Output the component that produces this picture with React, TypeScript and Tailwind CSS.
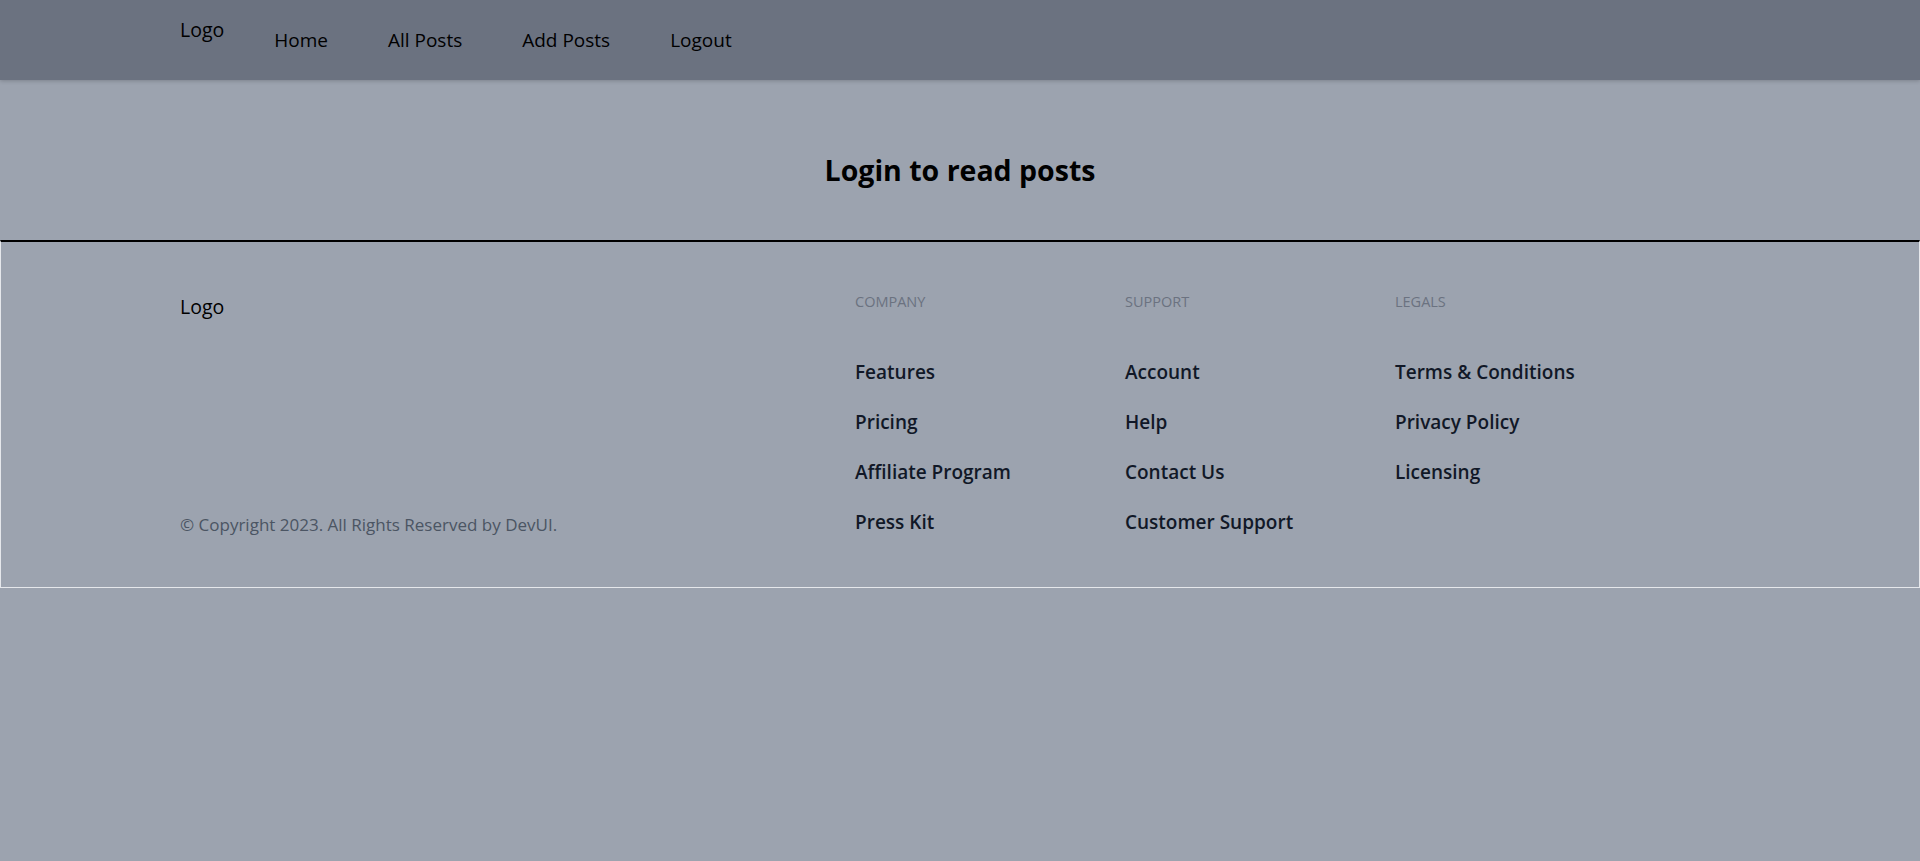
import React from "react";

const navItems = ["Home", "All Posts", "Add Posts", "Logout"];

const columns = [
  { title: "Company", width: "w-2/12", items: ["Features", "Pricing", "Affiliate Program", "Press Kit"] },
  { title: "Support", width: "w-2/12", items: ["Account", "Help", "Contact Us", "Customer Support"] },
  { title: "Legals", width: "w-3/12", items: ["Terms & Conditions", "Privacy Policy", "Licensing"] },
];

export default function App() {
  return (
    <div
      className="min-h-screen w-full bg-[#9ca3af] text-black"
      style={{ fontFamily: '"Open Sans", "Noto Sans", sans-serif' }}
    >
      <header className="relative z-10 bg-[#6b7280] py-[15px] shadow-[0_1px_4px_rgba(0,0,0,0.2)]">
        <div className="mx-auto w-full max-w-[1600px] px-[20px]">
          <nav className="flex">
            <div className="mr-[20px] text-[19.5px] leading-[30px]">Logo</div>
            <ul className="flex">
              {navItems.map((item) => (
                <li key={item}>
                  <button className="inline-block rounded-full px-[30px] py-[10px] text-[19px] leading-[30px]">
                    {item}
                  </button>
                </li>
              ))}
            </ul>
          </nav>
        </div>
      </header>

      <main className="mt-[20px] w-full py-[40px] text-center">
        <div className="mx-auto w-full max-w-[1600px] px-[20px]">
          <div className="w-full p-[10px]">
            <h1 className="text-[28.5px] font-bold leading-[40px]">Login to read posts</h1>
          </div>
        </div>
      </main>

      <footer className="border border-[#e5e7eb] border-t-2 border-t-black py-[50px]">
        <div className="mx-auto w-full max-w-[1600px] px-[20px]">
          <div className="-mx-[30px] flex">
            <div className="w-5/12 px-[30px]">
              <div className="flex h-full flex-col justify-between">
                <div className="text-[19.5px] leading-[30px]">Logo</div>
                <p className="text-[17px] leading-[25px] text-[#4b5563]">
                  © Copyright 2023. All Rights Reserved by DevUI.
                </p>
              </div>
            </div>
            {columns.map((col) => (
              <div key={col.title} className={`${col.width} px-[30px]`}>
                <h3 className="mb-[45px] text-[14.5px] font-medium uppercase leading-[20px] text-[#6b7280]">
                  {col.title}
                </h3>
                <ul className="flex flex-col gap-[20px]">
                  {col.items.map((it) => (
                    <li key={it} className="text-[19px] font-semibold leading-[30px] text-[#111827]">
                      {it}
                    </li>
                  ))}
                </ul>
              </div>
            ))}
          </div>
        </div>
      </footer>
    </div>
  );
}
